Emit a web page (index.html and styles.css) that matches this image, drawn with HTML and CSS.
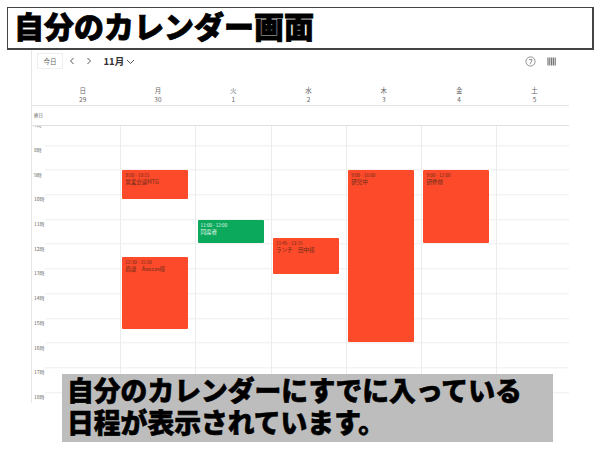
FILE: index.html
```html
<!DOCTYPE html>
<html lang="ja">
<head>
    <meta charset="UTF-8">
    <title>自分のカレンダー画面</title>
    <link rel="stylesheet" href="styles.css">
</head>
<body>
    <h1 class="title">自分のカレンダー画面</h1>

    <div class="calendar">
        <div class="toolbar">
            <span class="today">今日</span>
            <svg class="nav-icon prev" width="12" height="12" viewBox="0 0 12 12"><path d="M7.5 3 4.5 6l3 3" /></svg>
            <svg class="nav-icon next" width="12" height="12" viewBox="0 0 12 12"><path d="M4.5 3l3 3-3 3" /></svg>
            <span class="month">11月</span>
            <svg class="nav-icon caret" width="9" height="9" viewBox="0 0 9 9"><path d="M1 3l3.5 3.5L8 3" /></svg>
            <svg class="help-icon" width="11" height="11" viewBox="0 0 11 11"><circle cx="5.5" cy="5.5" r="4.6" /><path d="M3.8 3.6h3.4L5 8.2" /></svg>
            <svg class="view-icon" width="10" height="9" viewBox="0 0 10 9"><path d="M1 .5v8M2.8 .5v8M4.6 .5v8M6.4 .5v8M8.2 .5v8" /></svg>
        </div>

        <div class="days">
            <div class="day">日<br>29</div>
            <div class="day">月<br>30</div>
            <div class="day">火<br>1</div>
            <div class="day">水<br>2</div>
            <div class="day">木<br>3</div>
            <div class="day">金<br>4</div>
            <div class="day">土<br>5</div>
        </div>

        <div class="allday">終日</div>

        <div class="grid">
            <div class="hours">
                <div class="hour">7時</div>
                <div class="hour">8時</div>
                <div class="hour">9時</div>
                <div class="hour">10時</div>
                <div class="hour">11時</div>
                <div class="hour">12時</div>
                <div class="hour">13時</div>
                <div class="hour">14時</div>
                <div class="hour">15時</div>
                <div class="hour">16時</div>
                <div class="hour">17時</div>
                <div class="hour">18時</div>
            </div>
            <div class="columns">
                <div class="column"></div>
                <div class="column">
                    <div class="event red" style="top: 44px; height: 29px"><small>9:00 - 10:15</small>営業会議MTG</div>
                    <div class="event red" style="top: 131px; height: 72px"><small>12:30 - 15:30</small>商談　Asocas様</div>
                </div>
                <div class="column">
                    <div class="event green" style="top: 94px; height: 23px"><small>11:00 - 12:00</small>同席者</div>
                </div>
                <div class="column">
                    <div class="event red" style="top: 112px; height: 36px"><small>11:45 - 13:15</small>ランチ　田中様</div>
                </div>
                <div class="column">
                    <div class="event red" style="top: 44px; height: 172px"><small>9:00 - 16:00</small>研究中</div>
                </div>
                <div class="column">
                    <div class="event red" style="top: 44px; height: 73px"><small>9:00 - 12:00</small>研修前</div>
                </div>
                <div class="column"></div>
            </div>
        </div>
    </div>

    <div class="caption">自分のカレンダーにすでに入っている<br>日程が表示されています。</div>
</body>
</html>
```

FILE: styles.css
```css
body {
    margin: 0;
    height: 450px;
    overflow: hidden;
    background-color: #fff;
    font-family: "Noto Sans CJK JP", "Noto Sans", sans-serif;
    position: relative;
}
.title {
    box-sizing: border-box;
    height: 43px;
    margin: 7px 6px 0 7px;
    padding-left: 6px;
    border: 1px solid #444;
    border-width: 1px 2px 2px 1px;
    font-size: 30px;
    line-height: 35px;
    font-weight: 900;
    color: #000;
    -webkit-text-stroke: 0.8px #000;
}
.calendar {
    width: 537px;
    margin-left: 31px;
    border-left: 1px solid #e6e6e6;
    height: 353px;
}
.toolbar {
    height: 22px;
    display: flex;
    align-items: center;
    padding-left: 5px;
    font-size: 6.5px;
    color: #666;
}
.today {
    border: 1px solid #efefef;
    padding: 3px 5.5px;
    line-height: 8px;
}
.nav-icon path {
    fill: none;
    stroke: #555;
    stroke-width: 1;
}
.prev {
    margin-left: 3px;
}
.next {
    margin-left: 4.5px;
}
.month {
    font-size: 9.5px;
    font-weight: 700;
    color: #333;
    margin-left: 9px;
    margin-right: 1.5px;
}
.help-icon {
    margin-left: auto;
    margin-right: 11px;
}
.help-icon circle,
.help-icon path {
    fill: none;
    stroke: #666;
    stroke-width: 0.7;
}
.view-icon {
    margin-right: 12px;
}
.view-icon path {
    stroke: #777;
    stroke-width: 1.2;
}
.days {
    display: flex;
    height: 34px;
    padding: 14px 0 0 13px;
    border-bottom: 1px solid #e4e4e4;
    box-sizing: border-box;
}
.day {
    flex: 0 0 75.3px;
    text-align: center;
    font-size: 6.5px;
    line-height: 9px;
    color: #666;
}
.allday {
    height: 20px;
    box-sizing: border-box;
    border-bottom: 1px solid #e0e0e0;
    font-size: 4.5px;
    line-height: 18px;
    padding-left: 2px;
    color: #666;
}
.grid {
    display: flex;
    height: 277px;
    overflow: hidden;
}
.hours {
    width: 12.7px;
    flex: none;
    margin-top: -5.7px;
}
.hour {
    height: 24.7px;
    font-size: 5px;
    line-height: 6px;
    color: #666;
    padding: 2px 0 0 2px;
    box-sizing: border-box;
    white-space: nowrap;
}
.columns {
    flex: 1;
    display: flex;
    background-image: repeating-linear-gradient(to bottom, transparent 0, transparent 23.7px, #eeeeee 23.7px, #eeeeee 24.7px);
    background-position: 0 -4.7px;
}
.column {
    flex: 0 0 75.3px;
    box-sizing: border-box;
    position: relative;
    border-left: 1px solid #ececec;
}
.column:first-child {
    border-left: none;
}
.column:last-child {
    flex: 1;
}
.event {
    position: absolute;
    left: 1.3px;
    right: 7px;
    box-sizing: border-box;
    border-radius: 1px;
    padding: 2px 3px;
    font-size: 5.5px;
    line-height: 8px;
    color: #6a2a18;
    overflow: hidden;
    white-space: nowrap;
}
.event small {
    display: block;
    font-size: 4.6px;
    line-height: 6px;
}
.red {
    background-color: #fc4a2a;
}
.green {
    background-color: #0aa95c;
    color: #e8f8ef;
}
.caption {
    position: absolute;
    left: 62px;
    top: 374px;
    width: 491px;
    height: 68px;
    box-sizing: border-box;
    padding: 0 0 0 5px;
    background-color: #bdbdbd;
    font-size: 26.8px;
    line-height: 32px;
    font-weight: 900;
    color: #000;
    white-space: nowrap;
    -webkit-text-stroke: 0.6px #000;
}
```
